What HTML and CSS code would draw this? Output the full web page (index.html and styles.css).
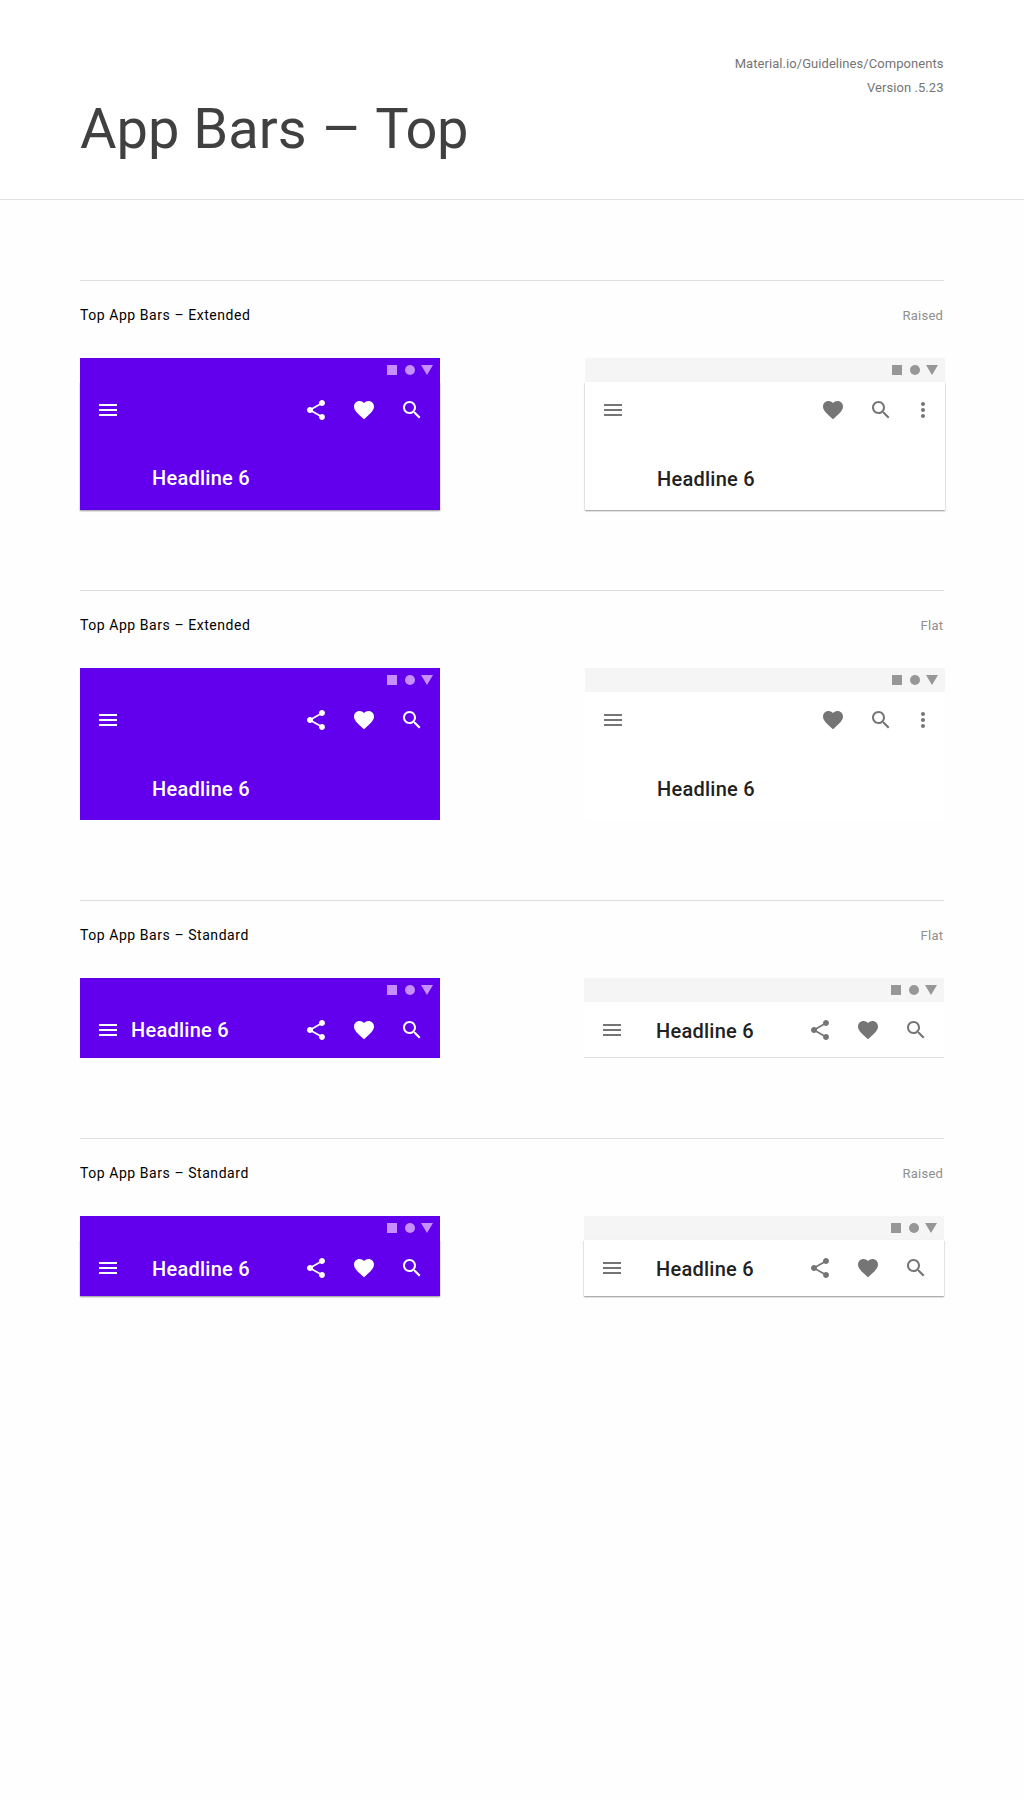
FILE: index.html
```html
<!DOCTYPE html>
<html lang="en">
<head>
<meta charset="utf-8">
<title>App Bars – Top</title>
<link rel="stylesheet" href="styles.css">
</head>
<body>
<svg class="sprite" aria-hidden="true">
  <symbol id="menu" viewBox="0 0 24 24"><path d="M3 18h18v-2H3v2zm0-5h18v-2H3v2zm0-7v2h18V6H3z"/></symbol>
  <symbol id="share" viewBox="0 0 24 24"><path d="M18 16.08c-.76 0-1.44.3-1.96.77L8.91 12.7c.05-.23.09-.46.09-.7s-.04-.47-.09-.7l7.05-4.11c.54.5 1.25.81 2.04.81 1.66 0 3-1.34 3-3s-1.34-3-3-3-3 1.34-3 3c0 .24.04.47.09.7L8.04 9.81C7.5 9.31 6.79 9 6 9c-1.66 0-3 1.34-3 3s1.34 3 3 3c.79 0 1.5-.31 2.04-.81l7.12 4.16c-.05.21-.08.43-.08.65 0 1.61 1.31 2.92 2.92 2.92s2.92-1.31 2.92-2.92-1.31-2.92-2.92-2.92z"/></symbol>
  <symbol id="heart" viewBox="0 0 24 24"><path d="M12 21.35l-1.45-1.32C5.4 15.36 2 12.28 2 8.5 2 5.42 4.42 3 7.5 3c1.74 0 3.41.81 4.5 2.09C13.09 3.81 14.76 3 16.5 3 19.58 3 22 5.42 22 8.5c0 3.78-3.4 6.86-8.55 11.54L12 21.35z"/></symbol>
  <symbol id="search" viewBox="0 0 24 24"><path d="M15.5 14h-.79l-.28-.27C15.41 12.59 16 11.11 16 9.5 16 5.91 13.09 3 9.5 3S3 5.91 3 9.5 5.91 16 9.5 16c1.61 0 3.09-.59 4.23-1.57l.27.28v.79l5 4.99L20.49 19l-4.99-5zm-6 0C7.01 14 5 11.99 5 9.5S7.01 5 9.5 5 14 7.01 14 9.5 11.99 14 9.5 14z"/></symbol>
  <symbol id="more" viewBox="0 0 24 24"><path d="M12 8c1.1 0 2-.9 2-2s-.9-2-2-2-2 .9-2 2 .9 2 2 2zm0 2c-1.1 0-2 .9-2 2s.9 2 2 2 2-.9 2-2-.9-2-2-2zm0 6c-1.1 0-2 .9-2 2s.9 2 2 2 2-.9 2-2-.9-2-2-2z"/></symbol>
  <symbol id="status" viewBox="0 0 46 10"><path d="M0 0h10v10H0zM34 0h12l-6 10z"/><circle cx="23" cy="5" r="5"/></symbol>
</svg>

<header class="page-header">
  <h1>App Bars <span class="dash">–</span> <span class="tail">Top</span></h1>
  <p class="meta">Material.io/Guidelines/Components<br>Version .5.23</p>
</header>

<main>
  <section class="group">
    <div class="group-head"><h2>Top App Bars – Extended</h2><span>Raised</span></div>
    <div class="bars wide">
      <div class="app-bar primary extended raised">
        <div class="status-bar"><svg><use href="#status"/></svg></div>
        <div class="toolbar">
          <div class="row"><svg class="icon"><use href="#menu"/></svg><div class="actions"><svg class="icon"><use href="#share"/></svg><svg class="icon"><use href="#heart"/></svg><svg class="icon"><use href="#search"/></svg></div></div>
          <div class="title high">Headline 6</div>
        </div>
      </div>
      <div class="app-bar surface extended raised">
        <div class="status-bar"><svg><use href="#status"/></svg></div>
        <div class="toolbar">
          <div class="row overflow"><svg class="icon"><use href="#menu"/></svg><div class="actions"><svg class="icon"><use href="#heart"/></svg><svg class="icon"><use href="#search"/></svg><svg class="icon more"><use href="#more"/></svg></div></div>
          <div class="title">Headline 6</div>
        </div>
      </div>
    </div>
  </section>

  <section class="group">
    <div class="group-head"><h2>Top App Bars – Extended</h2><span>Flat</span></div>
    <div class="bars wide">
      <div class="app-bar primary extended">
        <div class="status-bar"><svg><use href="#status"/></svg></div>
        <div class="toolbar">
          <div class="row"><svg class="icon"><use href="#menu"/></svg><div class="actions"><svg class="icon"><use href="#share"/></svg><svg class="icon"><use href="#heart"/></svg><svg class="icon"><use href="#search"/></svg></div></div>
          <div class="title">Headline 6</div>
        </div>
      </div>
      <div class="app-bar surface extended">
        <div class="status-bar"><svg><use href="#status"/></svg></div>
        <div class="toolbar">
          <div class="row overflow"><svg class="icon"><use href="#menu"/></svg><div class="actions"><svg class="icon"><use href="#heart"/></svg><svg class="icon"><use href="#search"/></svg><svg class="icon more"><use href="#more"/></svg></div></div>
          <div class="title">Headline 6</div>
        </div>
      </div>
    </div>
  </section>

  <section class="group">
    <div class="group-head"><h2>Top App Bars – Standard</h2><span>Flat</span></div>
    <div class="bars">
      <div class="app-bar primary">
        <div class="status-bar"><svg><use href="#status"/></svg></div>
        <div class="toolbar row"><svg class="icon"><use href="#menu"/></svg><div class="title tight high">Headline 6</div><div class="actions"><svg class="icon"><use href="#share"/></svg><svg class="icon"><use href="#heart"/></svg><svg class="icon"><use href="#search"/></svg></div></div>
      </div>
      <div class="app-bar surface outlined">
        <div class="status-bar"><svg><use href="#status"/></svg></div>
        <div class="toolbar row"><svg class="icon"><use href="#menu"/></svg><div class="title">Headline 6</div><div class="actions"><svg class="icon"><use href="#share"/></svg><svg class="icon"><use href="#heart"/></svg><svg class="icon"><use href="#search"/></svg></div></div>
      </div>
    </div>
  </section>

  <section class="group">
    <div class="group-head"><h2>Top App Bars – Standard</h2><span>Raised</span></div>
    <div class="bars">
      <div class="app-bar primary raised">
        <div class="status-bar"><svg><use href="#status"/></svg></div>
        <div class="toolbar row"><svg class="icon"><use href="#menu"/></svg><div class="title">Headline 6</div><div class="actions"><svg class="icon"><use href="#share"/></svg><svg class="icon"><use href="#heart"/></svg><svg class="icon"><use href="#search"/></svg></div></div>
      </div>
      <div class="app-bar surface raised">
        <div class="status-bar"><svg><use href="#status"/></svg></div>
        <div class="toolbar row"><svg class="icon"><use href="#menu"/></svg><div class="title">Headline 6</div><div class="actions"><svg class="icon"><use href="#share"/></svg><svg class="icon"><use href="#heart"/></svg><svg class="icon"><use href="#search"/></svg></div></div>
      </div>
    </div>
  </section>
</main>
</body>
</html>
```
FILE: styles.css
```css
* { box-sizing: border-box; }
body { margin: 0; min-height: 1800px; background: #fefefe; font-family: Roboto, sans-serif; color: #000; }
.sprite { display: none; }
h1, h2, p { margin: 0; font-weight: 400; }
svg { display: block; fill: currentColor; }

.page-header { display: flex; justify-content: space-between; height: 200px; padding: 52px 80px 0; background: #fff; border-bottom: 1px solid #e0e0e0; }
h1 { padding-top: 44px; font-size: 56px; line-height: 66px; color: #404040; }
.dash { display: inline-block; margin: 0 1.2px 0 3px; transform: scaleX(1.1); }
.tail { letter-spacing: -0.4px; }
.meta { padding-right: 0.5px; font-size: 13px; line-height: 24px; letter-spacing: 0.06px; text-align: right; color: #757575; }

main { display: flex; flex-direction: column; gap: 80px; padding: 80px 80px 0; }
.group-head { display: flex; justify-content: space-between; height: 78px; padding-top: 25px; border-top: 1px solid #dedede; line-height: 18px; }
h2 { font-size: 14px; line-height: 18px; letter-spacing: 0.56px; }
.group-head span { padding: 1px 0.8px 0 0; font-size: 13px; letter-spacing: 0.25px; color: #8e8e8e; }

.bars { display: flex; justify-content: space-between; }
.bars.wide { margin-right: -1px; }
.app-bar { width: 360px; }
.primary { background: #6200ee; color: #fff; }
.surface { color: #757575; }
.status-bar { display: flex; justify-content: flex-end; height: 24px; padding: 7px 7px 0 0; background: #f5f5f5; color: #979797; }
.status-bar svg { width: 46px; height: 10px; }
.primary .status-bar { background: #6200ee; color: #c58fff; }
.toolbar { background: #fff; }
.primary .toolbar { background: #6200ee; }
.raised .toolbar { box-shadow: 0 1px 1.5px rgba(0, 0, 0, 0.42); }
.outlined .toolbar { border-bottom: 1px solid #e0e0e0; }
.extended .toolbar { height: 128px; }
.row { display: flex; align-items: flex-start; height: 56px; padding: 16px 16px 0; }
.row.overflow { padding-right: 10px; }
.icon { width: 24px; height: 24px; }
.actions { display: flex; gap: 24px; margin-left: auto; }
.icon.more { margin-left: -6px; }

.title { font-size: 20px; font-weight: 500; line-height: 24px; letter-spacing: 0.25px; color: #212121; }
.primary .title { color: #fff; }
.row .title { margin: 1px 0 0 32px; }
.row .title.tight { margin-left: 11px; }
.row .title.high { margin-top: 0; }
.extended .title { padding: 29px 0 0 72px; }
.extended .title.high { padding-top: 28px; }
```
